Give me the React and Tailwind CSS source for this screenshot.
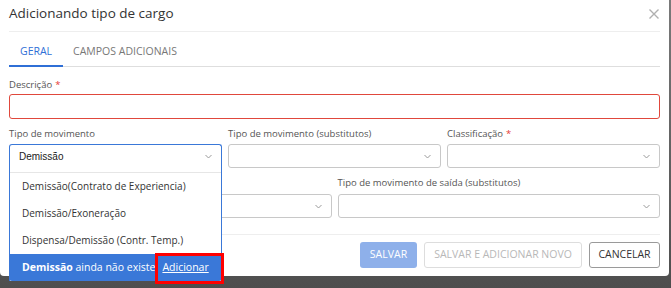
import React from "react";

const font = { fontFamily: "'Open Sans', 'Noto Sans', sans-serif" };

const Chevron = () => (
  <svg width="7" height="5" viewBox="0 0 7 5" fill="none" className="shrink-0">
    <path d="M0.5 1 L3.5 4 L6.5 1" stroke="#9a9a9a" strokeWidth="1" />
  </svg>
);

const Label = ({ children, required }) => (
  <div className="h-[12px] leading-[12px] text-[9.5px] text-[#555]">
    {children}
    {required && <span className="text-[#e53935] ml-[3px]">*</span>}
  </div>
);

const Select = () => (
  <div className="h-[24px] border border-[#c8c8c8] rounded-[3px] bg-white flex items-center justify-end pr-[9px]">
    <Chevron />
  </div>
);

const options = [
  "Demissão(Contrato de Experiencia)",
  "Demissão/Exoneração",
  "Dispensa/Demissão (Contr. Temp.)",
];

const OpenSelect = () => (
  <div className="relative h-[24px]">
    <div className="absolute left-0 right-0 top-0 z-10 bg-white border-x border-t border-[#3a78d8] rounded-t-[3px]">
      <div className="h-[23px] flex items-center justify-between pl-[9px] pr-[9px]">
        <span
          className="text-[10px] text-[#222]"
          style={{ fontFamily: "'Liberation Sans', Arial, sans-serif" }}
        >
          Demissão
        </span>
        <Chevron />
      </div>
      <div className="h-[4px] border-b border-[#e6e6e6] box-content" />
      {options.map((o) => (
        <div key={o} className="h-[27px] flex items-center pl-[12px] text-[10px] text-[#333]">
          {o}
        </div>
      ))}
      <div className="h-[27px] flex items-center text-[10.5px] text-white bg-[#3a78d8] rounded-b-[3px] -mx-px px-[13px] whitespace-nowrap">
        <span className="font-bold">Demissão</span>
        <span>&nbsp;ainda não existe</span>
        <span className="underline ml-[7px]">Adicionar</span>
      </div>
      <div className="absolute left-[145px] top-[108px] w-[69px] h-[31px] border-[3px] border-[#ff0000]" />
    </div>
  </div>
);

export default function App() {
  return (
    <div className="w-[671px] h-[288px] overflow-hidden bg-gradient-to-b from-[#7a7a7a] to-[#4e4e4e]" style={font}>
      <div className="w-[669px] h-[276px] bg-white rounded-b-[4px] px-[9px]">
        <div className="h-[32px] pb-[4px] border-b border-[#eeeeee] flex items-center justify-between">
          <h1 className="text-[13.5px] text-[#333] font-normal">Adicionando tipo de cargo</h1>
          <svg width="10" height="10" viewBox="0 0 10 10" className="mr-px">
            <path d="M0.5 0.5 L9.5 9.5 M9.5 0.5 L0.5 9.5" stroke="#b0b0b0" strokeWidth="1.4" />
          </svg>
        </div>

        <div className="h-[35px] border-b border-[#dedede] flex text-[10.5px]">
          <div className="px-[11px] pt-[6px] flex items-center text-[#2f6fd6] border-b-2 border-[#2f6fd6] -mb-px">
            GERAL
          </div>
          <div className="px-[10px] pt-[6px] flex items-center text-[#777]">CAMPOS ADICIONAIS</div>
        </div>

        <div className="mt-[12px]">
          <Label required>Descrição</Label>
          <div className="mt-[3px] h-[25px] border border-[#e0483c] rounded-[3px]" />
        </div>

        <div className="mt-[9px] grid grid-cols-3 gap-x-[6px]">
          <div>
            <Label>Tipo de movimento</Label>
            <div className="mt-[4px]">
              <OpenSelect />
            </div>
          </div>
          <div>
            <Label>Tipo de movimento (substitutos)</Label>
            <div className="mt-[4px]">
              <Select />
            </div>
          </div>
          <div>
            <Label required>Classificação</Label>
            <div className="mt-[4px]">
              <Select />
            </div>
          </div>
        </div>

        <div className="mt-[9px] grid grid-cols-2 gap-x-[6px]">
          <div>
            <div className="h-[12px]" />
            <div className="mt-[5px]">
              <Select />
            </div>
          </div>
          <div>
            <Label>Tipo de movimento de saída (substitutos)</Label>
            <div className="mt-[5px]">
              <Select />
            </div>
          </div>
        </div>

        <div className="mt-[16px] border-t border-[#eeeeee] pt-[7px] flex justify-end gap-[7px] text-[10.5px]">
          <button className="h-[26px] w-[57px] rounded-[3px] bg-[#8eb0ea] text-white">SALVAR</button>
          <button className="h-[26px] w-[158px] rounded-[3px] border border-[#dddddd] text-[#b8b8b8]">
            SALVAR E ADICIONAR NOVO
          </button>
          <button className="h-[26px] w-[71px] rounded-[3px] border border-[#9a9a9a] text-[#333]">
            CANCELAR
          </button>
        </div>
      </div>
    </div>
  );
}
